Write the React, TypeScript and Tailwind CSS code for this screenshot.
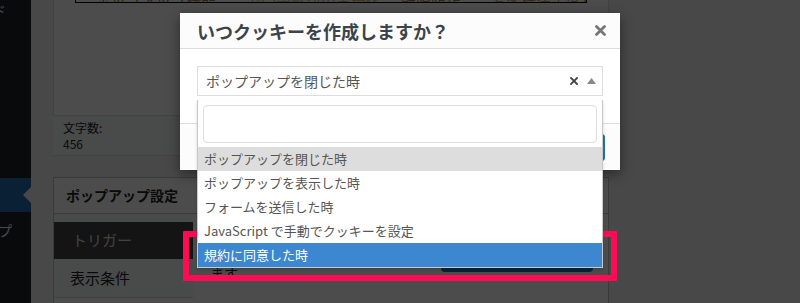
import React from "react";

const font = { fontFamily: '"Noto Sans CJK JP", "Noto Sans", sans-serif' };

function CloseIcon() {
  return (
    <svg width="11" height="11" viewBox="0 0 11 11">
      <path d="M1.5 1.5 L9.5 9.5 M9.5 1.5 L1.5 9.5" stroke="#777" strokeWidth="2.8" strokeLinecap="round" />
    </svg>
  );
}

function ClearIcon() {
  return (
    <svg width="8" height="8" viewBox="0 0 8 8">
      <path d="M1 1 L7 7 M7 1 L1 7" stroke="#444" strokeWidth="1.8" strokeLinecap="square" />
    </svg>
  );
}

function ArrowUp() {
  return (
    <svg width="9" height="6" viewBox="0 0 9 6">
      <path d="M0 6 L4.5 0 L9 6 Z" fill="#888" />
    </svg>
  );
}

export default function App() {
  const options = [
    "ポップアップを閉じた時",
    "ポップアップを表示した時",
    "フォームを送信した時",
    "JavaScript で手動でクッキーを設定",
  ];
  return (
    <div className="relative w-[800px] h-[303px] overflow-hidden bg-[#f0f0f1]" style={font}>
      <div className="flex h-full">
        {/* sidebar */}
        <div className="w-[31px] shrink-0 bg-[#1d2327] flex flex-col overflow-hidden text-[14px] text-[#f0f0f1]">
          <div className="h-[20px] flex items-center whitespace-nowrap ml-[-92px]">ダッシュボード</div>
          <div className="h-[158px]" />
          <div className="relative h-[34px] bg-[#2271b1]">
            <div className="absolute right-0 top-[9px] w-0 h-0 border-y-[8px] border-y-transparent border-r-[8px] border-r-[#f0f0f1]" />
          </div>
          <div className="h-[36px] flex items-center whitespace-nowrap ml-[-72px]">ポップアップ</div>
        </div>

        {/* main */}
        <div className="flex-1 pl-[22px]">
          <div className="w-[556px] flex flex-col">
            {/* editor */}
            <div className="h-[115px] bg-white border-x border-[#dcdcde] pl-[21px] overflow-hidden">
              <div className="w-[512px] h-[30px] -mt-[27px] border border-black flex items-end pl-[20px] overflow-hidden">
                <div className="text-[15px] leading-[20px] -mb-[9px] whitespace-nowrap">
                  <span className="text-[#a87a30] underline">ポップアップ機能</span>
                  <span className="text-[#d8b44c] ml-[30px]">で問題解決の実現化</span>
                  <span className="text-[#a87a30] ml-[20px] underline">離脱防止</span>
                  <span className="text-[#c89a40] ml-[30px]">お客様満足度を向上させる</span>
                </div>
              </div>
            </div>
            {/* status bar */}
            <div className="h-[41px] border-y border-[#dcdcde] bg-[#f6f7f7] px-[10px] pt-[4px] text-[12px] leading-[16px] text-[#1d2327]">
              <div>文字数:</div>
              <div>456</div>
            </div>
            {/* panel */}
            <div className="mt-[21px] border border-[#c3c4c7] bg-white h-[200px]">
              <div className="h-[36px] border-b border-[#c3c4c7] flex items-center pl-[12px] text-[14px] font-bold text-[#1d2327]">
                ポップアップ設定
              </div>
              <div className="flex">
                <div className="w-[139px] shrink-0 bg-[#f6f7f7] pt-[8px] text-[15px]">
                  <div className="h-[37px] bg-[#444444] text-[#dddddd] flex items-center pl-[18px]">トリガー</div>
                  <div className="h-[39px] border-b border-[#dcdcde] text-[#1d2327] flex items-center pl-[16px]">表示条件</div>
                </div>
                <div className="flex-1 flex pt-[23px] pl-[17px] pr-[15px]">
                  <div className="flex-1 text-[14px] leading-[24px] text-[#1d2327] whitespace-nowrap">
                    <div>タイミングを設定し</div>
                    <div>ます。</div>
                  </div>
                  <div className="mt-[5px] w-[152px] h-[30px] rounded-[4px] bg-[#2271b1]" />
                </div>
              </div>
            </div>
          </div>
        </div>
      </div>

      {/* overlay */}
      <div className="absolute inset-0 bg-black/70" />

      {/* modal */}
      <div className="absolute left-[180px] top-[13px] w-[440px] bg-white shadow-[0_4px_12px_rgba(0,0,0,0.45)]">
        <div className="h-[36px] bg-[#fcfcfc] border-b border-[#dddddd] flex items-center justify-between pl-[17px] pr-[14px]">
          <div className="text-[18px] font-bold text-[#3c434a] leading-none">いつクッキーを作成しますか？</div>
          <CloseIcon />
        </div>
        <div className="pt-[17px] px-[17px] pb-[27px]">
          <div className="relative h-[30px] border border-[#dddddd] flex items-center pl-[8px] text-[14px] text-[#555555]">
            <span>ポップアップを閉じた時</span>
            <div className="ml-auto flex items-center gap-[9px] pr-[6px]">
              <ClearIcon />
              <ArrowUp />
            </div>
            {/* dropdown */}
            <div className="absolute left-[-1px] right-[-1px] top-[33px] z-10 bg-white border-x border-b border-[#c8c8c8] shadow-[0_2px_3px_rgba(0,0,0,0.15)]">
              <div className="px-[5px] pt-[5px]">
                <div className="h-[38px] rounded-[4px] border border-[#dddddd]" />
              </div>
              <ul className="mt-[4px] text-[13px]">
                {options.map((o, i) => (
                  <li
                    key={o}
                    className={
                      i === 0
                        ? "h-[24px] leading-[24px] px-[6px] bg-[#dddddd] text-[#555555] whitespace-nowrap"
                        : "h-[24px] leading-[24px] px-[6px] text-[#555555] whitespace-nowrap"
                    }
                  >
                    {o}
                  </li>
                ))}
                <li className="h-[24px] leading-[24px] px-[6px] bg-[#3d87d1] text-white whitespace-nowrap">規約に同意した時</li>
              </ul>
            </div>
          </div>
        </div>
        <div className="h-[47px] border-t border-[#dddddd] bg-[#fcfcfc] flex items-center justify-end pr-[15px]">
          <div className="h-[27px] w-[100px] rounded-[3px] bg-[#2271b1] border border-[#2271b1]" />
        </div>
      </div>

      {/* annotation */}
      <div className="absolute left-[183px] top-[231px] w-[434px] h-[50px] border-[6px] border-[#ff0a54] rounded-[1px]" />
    </div>
  );
}
